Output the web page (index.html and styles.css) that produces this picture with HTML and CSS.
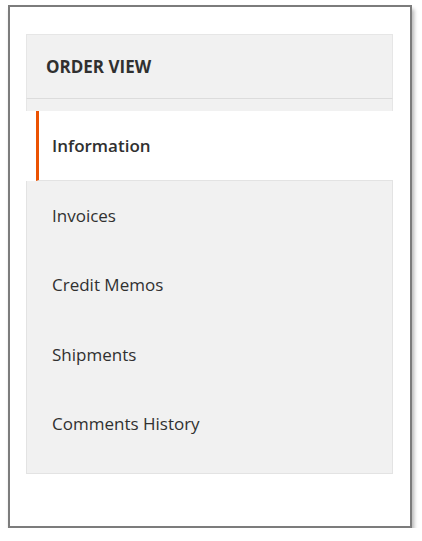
FILE: index.html
```html
<!DOCTYPE html>
<html>
<head>
<meta charset="utf-8">
<link rel="stylesheet" href="styles.css">
</head>
<body>
<div class="frame">
  <div class="panel">
    <div class="panel-title">ORDER VIEW</div>
    <div class="strip"></div>
    <div class="item active">Information</div>
    <ul class="list">
      <li class="item">Invoices</li>
      <li class="item">Credit Memos</li>
      <li class="item">Shipments</li>
      <li class="item">Comments History</li>
    </ul>
  </div>
</div>
</body>
</html>
```
FILE: styles.css
```css
html, body {
  margin: 0;
  padding: 0;
  background: #ffffff;
}
body {
  padding: 5px 0 0 8px;
  font-family: "Open Sans", "Noto Sans", sans-serif;
  color: #303030;
}
.frame {
  box-sizing: border-box;
  width: 404px;
  height: 523px;
  border: 2px solid #7c7c7c;
  background: #fff;
  box-shadow: 2px 4px 4px rgba(0,0,0,0.3);
  padding: 27px 16px 0 16px;
}
.panel {
  width: 367px;
}
.panel-title {
  box-sizing: border-box;
  height: 65px;
  background: #f1f1f1;
  border: 1px solid #e6e6e6;
  border-bottom-color: #dcdcdc;
  padding-left: 19px;
  display: flex;
  align-items: center;
  font-size: 17px;
  font-weight: 700;
}
.strip {
  height: 12px;
  background: #f1f1f1;
  border: 1px solid #e6e6e6;
  border-top: 0;
  border-bottom: 0;
}
.item {
  box-sizing: border-box;
  height: 69.3px;
  display: flex;
  align-items: center;
  padding-left: 25px;
  font-size: 17px;
  list-style: none;
}
.item.active {
  margin-left: 10px;
  padding-left: 13px;
  border-left: 3px solid #eb5202;
  border-bottom: 1px solid #e3e3e3;
  background: #fff;
  font-weight: 600;
  height: 70px;
}
.list {
  margin: 0;
  padding: 0 0 15px 0;
  background: #f1f1f1;
  border: 1px solid #e3e3e3;
  border-top: 0;
}
```
